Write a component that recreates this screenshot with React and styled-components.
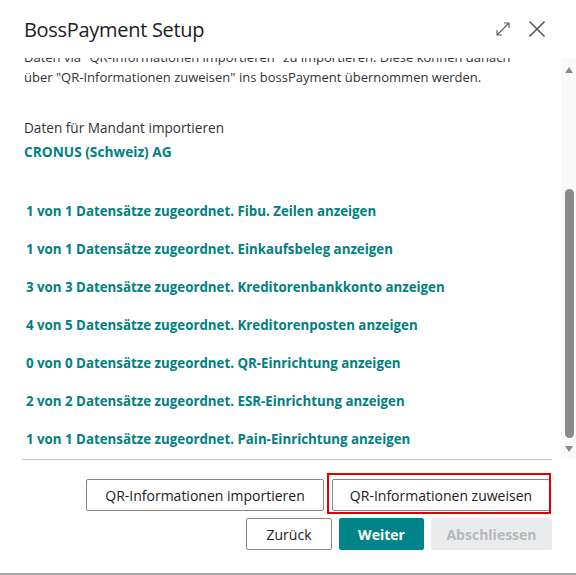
import React from "react";
import styled, { createGlobalStyle } from "styled-components";

const Global = createGlobalStyle`
  html, body { margin: 0; padding: 0; background: #ffffff; }
  body { font-family: "Open Sans", "Noto Sans", sans-serif; color: #212121; }
  * { box-sizing: border-box; }
`;

const Dialog = styled.div`
  width: 576px;
  height: 575px;
  display: flex;
  flex-direction: column;
  background: #fff;
  border-bottom: 2px solid #a6a6a6;
`;

const Header = styled.div`
  height: 58px;
  display: flex;
  align-items: center;
  padding: 0 30px 0 24px;
  flex-shrink: 0;
`;

const Title = styled.h1`
  margin: 0;
  flex: 1;
  font-size: 20px;
  font-weight: 400;
  color: #212121;
  letter-spacing: -0.3px;
`;

const IconButton = styled.button`
  border: none;
  background: none;
  padding: 0;
  margin-left: ${(p) => p.$gap || 0}px;
  display: flex;
  align-items: center;
  justify-content: center;
  color: #5a5a5a;
  cursor: pointer;
`;

const Body = styled.div`
  height: 400px;
  display: flex;
  flex-shrink: 0;
`;

const Viewport = styled.div`
  flex: 1;
  overflow: hidden;
  padding: 0 24px;
`;

const Content = styled.div`
  margin-top: -11px;
`;

const Intro = styled.p`
  margin: 0;
  font-size: 13px;
  line-height: 20px;
  color: #333;
  white-space: nowrap;
`;

const Label = styled.div`
  margin-top: 31px;
  font-size: 13.6px;
  line-height: 20px;
  color: #333;
`;

const Company = styled.div`
  margin-top: 4px;
  font-size: 13.7px;
  line-height: 20px;
  font-weight: 700;
  color: #00807f;
`;

const Links = styled.div`
  margin-top: 30px;
  display: flex;
  flex-direction: column;
`;

const LinkRow = styled.a`
  display: block;
  height: 38px;
  padding: 9px 0 9px 2px;
  font-size: 13.3px;
  line-height: 20px;
  font-weight: 700;
  color: #00807f;
  text-decoration: none;
  white-space: nowrap;
`;

const Scrollbar = styled.div`
  width: 15px;
  background: #f9f9f9;
  display: flex;
  flex-direction: column;
  align-items: center;
  padding: 9px 0 6px 1px;
`;

const Arrow = styled.div`
  width: 0;
  height: 0;
  border-left: 4px solid transparent;
  border-right: 4px solid transparent;
  ${(p) =>
    p.$down
      ? "border-top: 6px solid #8a8a8a;"
      : "border-bottom: 6px solid #8a8a8a;"}
`;

const Track = styled.div`
  flex: 1;
  width: 100%;
  display: flex;
  flex-direction: column;
  justify-content: flex-end;
  align-items: center;
  padding-bottom: 8px;
`;

const Thumb = styled.div`
  width: 9px;
  height: 249px;
  border-radius: 5px;
  background: #8a8a8a;
`;

const Footer = styled.div`
  padding: 0 24px 0 22px;
  display: flex;
  flex-direction: column;
  align-items: flex-end;
`;

const Separator = styled.hr`
  width: 100%;
  margin: 1px 0 0;
  border: none;
  border-top: 1px solid #c8c8c8;
`;

const ButtonRow = styled.div`
  display: flex;
  gap: ${(p) => p.$gap}px;
  margin-top: ${(p) => p.$top}px;
  margin-right: ${(p) => p.$right || 0}px;
`;

const Button = styled.button`
  position: relative;
  height: 32px;
  width: ${(p) => p.$w}px;
  padding: 0;
  font-family: "Open Sans", "Noto Sans", sans-serif;
  font-size: 14px;
  border-radius: 2px;
  cursor: pointer;
  white-space: nowrap;
  ${(p) =>
    p.$variant === "primary"
      ? "background:#008489;color:#fff;border:1px solid #008489;font-weight:700;"
      : p.$variant === "disabled"
      ? "background:#eaebec;color:#b7b8ba;border:1px solid #eaebec;font-weight:700;"
      : "background:#fff;color:#212121;border:1px solid #8a8886;font-weight:400;"}
`;

const Highlight = styled.span`
  position: absolute;
  top: -7px;
  left: -6px;
  right: -2px;
  bottom: -4px;
  border: 2px solid #e00000;
  pointer-events: none;
`;

const links = [
  "1 von 1 Datensätze zugeordnet. Fibu. Zeilen anzeigen",
  "1 von 1 Datensätze zugeordnet. Einkaufsbeleg anzeigen",
  "3 von 3 Datensätze zugeordnet. Kreditorenbankkonto anzeigen",
  "4 von 5 Datensätze zugeordnet. Kreditorenposten anzeigen",
  "0 von 0 Datensätze zugeordnet. QR-Einrichtung anzeigen",
  "2 von 2 Datensätze zugeordnet. ESR-Einrichtung anzeigen",
  "1 von 1 Datensätze zugeordnet. Pain-Einrichtung anzeigen",
];

export default function App() {
  return (
    <>
      <Global />
      <Dialog>
        <Header>
          <Title>BossPayment Setup</Title>
          <IconButton aria-label="Maximieren">
            <svg width="16" height="16" viewBox="0 0 16 16" fill="none" stroke="currentColor" strokeWidth="1.1">
              <path d="M2 14 L14 2 M9 2 H14 V7 M2 9 V14 H7" />
            </svg>
          </IconButton>
          <IconButton $gap={17} aria-label="Schliessen">
            <svg width="18" height="18" viewBox="0 0 18 18" fill="none" stroke="currentColor" strokeWidth="1.6">
              <path d="M1.5 1.5 L16.5 16.5 M16.5 1.5 L1.5 16.5" />
            </svg>
          </IconButton>
        </Header>
        <Body>
          <Viewport>
            <Content>
              <Intro>
                Daten via "QR-Informationen importieren" zu importieren. Diese können danach
                <br />
                über "QR-Informationen zuweisen" ins bossPayment übernommen werden.
              </Intro>
              <Label>Daten für Mandant importieren</Label>
              <Company>CRONUS (Schweiz) AG</Company>
              <Links>
                {links.map((t) => (
                  <LinkRow key={t} href="#">
                    {t}
                  </LinkRow>
                ))}
              </Links>
            </Content>
          </Viewport>
          <Scrollbar>
            <Arrow />
            <Track>
              <Thumb />
            </Track>
            <Arrow $down />
          </Scrollbar>
        </Body>
        <Footer>
          <Separator />
          <ButtonRow $top={19} $gap={8} $right={2}>
            <Button $w={238}>QR-Informationen importieren</Button>
            <Button $w={218}>
              QR-Informationen zuweisen
              <Highlight />
            </Button>
          </ButtonRow>
          <ButtonRow $top={7} $gap={7}>
            <Button $w={86}>Zurück</Button>
            <Button $w={85} $variant="primary">Weiter</Button>
            <Button $w={121} $variant="disabled">Abschliessen</Button>
          </ButtonRow>
        </Footer>
      </Dialog>
    </>
  );
}
